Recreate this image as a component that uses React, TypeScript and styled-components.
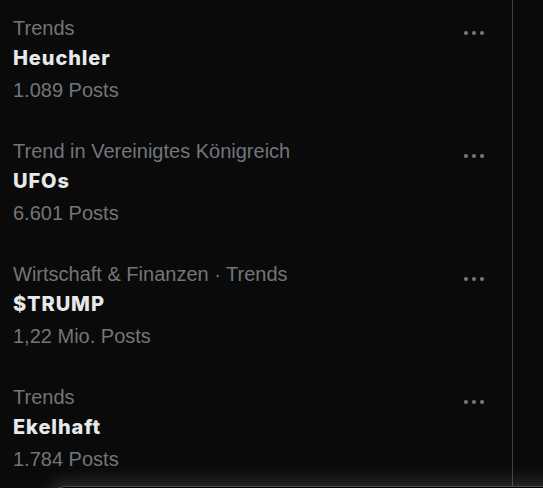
import React from 'react'
import styled, { createGlobalStyle } from 'styled-components'

const GlobalStyle = createGlobalStyle`
  html, body {
    margin: 0;
    padding: 0;
    background: #0a0a0a;
    overflow: hidden;
  }
  body {
    font-family: 'Liberation Sans', Arial, sans-serif;
  }
`

const Page = styled.div`
  position: relative;
  width: 543px;
  height: 488px;
  overflow: hidden;
  background: #0a0a0a;
`

const Column = styled.section`
  width: 512px;
  height: 100%;
  border-right: 1px solid #3b3e42;
`

const Row = styled.div`
  display: flex;
  justify-content: space-between;
  align-items: flex-start;
  height: 123px;
  box-sizing: border-box;
  padding: 15px 0 0 13px;
`

const Info = styled.div`
  display: flex;
  flex-direction: column;
`

const Meta = styled.span<{ $gap?: number }>`
  font-size: 20px;
  line-height: 26px;
  color: #71767b;
  margin-top: ${(p) => p.$gap ?? 0}px;
`

const Title = styled.span`
  font-family: Inter, 'Liberation Sans', Arial, sans-serif;
  font-size: 20px;
  line-height: 26px;
  font-weight: 800;
  letter-spacing: 0.9px;
  color: #e7e9ea;
  margin-top: 4px;
`

const MoreButton = styled.button`
  display: flex;
  align-items: center;
  justify-content: center;
  width: 26px;
  height: 26px;
  margin: 5px 25px 0 0;
  padding: 0;
  border: none;
  background: transparent;
  color: #71767b;
`

const Drawer = styled.div`
  position: absolute;
  left: 50px;
  right: -20px;
  top: 486px;
  height: 60px;
  background: #000;
  border-top: 1px solid #4a4d50;
  border-top-left-radius: 16px;
  box-shadow: 0 0 18px 4px rgba(255, 255, 255, 0.16);
`

interface TrendData {
  category: string
  name: string
  posts: string
}

const trends: TrendData[] = [
  { category: 'Trends', name: 'Heuchler', posts: '1.089 Posts' },
  { category: 'Trend in Vereinigtes Königreich', name: 'UFOs', posts: '6.601 Posts' },
  { category: 'Wirtschaft & Finanzen · Trends', name: '$TRUMP', posts: '1,22 Mio. Posts' },
  { category: 'Trends', name: 'Ekelhaft', posts: '1.784 Posts' },
]

const MoreIcon = () => (
  <svg width="20" height="6" viewBox="0 0 20 6" fill="currentColor">
    <circle cx="2" cy="3" r="2.1" />
    <circle cx="10" cy="3" r="2.1" />
    <circle cx="18" cy="3" r="2.1" />
  </svg>
)

const TrendRow = ({ category, name, posts }: TrendData) => (
  <Row>
    <Info>
      <Meta>{category}</Meta>
      <Title>{name}</Title>
      <Meta $gap={6}>{posts}</Meta>
    </Info>
    <MoreButton aria-label="Mehr">
      <MoreIcon />
    </MoreButton>
  </Row>
)

export default function App() {
  return (
    <Page>
      <GlobalStyle />
      <Column>
        {trends.map((t) => (
          <TrendRow key={t.name} {...t} />
        ))}
      </Column>
      <Drawer />
    </Page>
  )
}
